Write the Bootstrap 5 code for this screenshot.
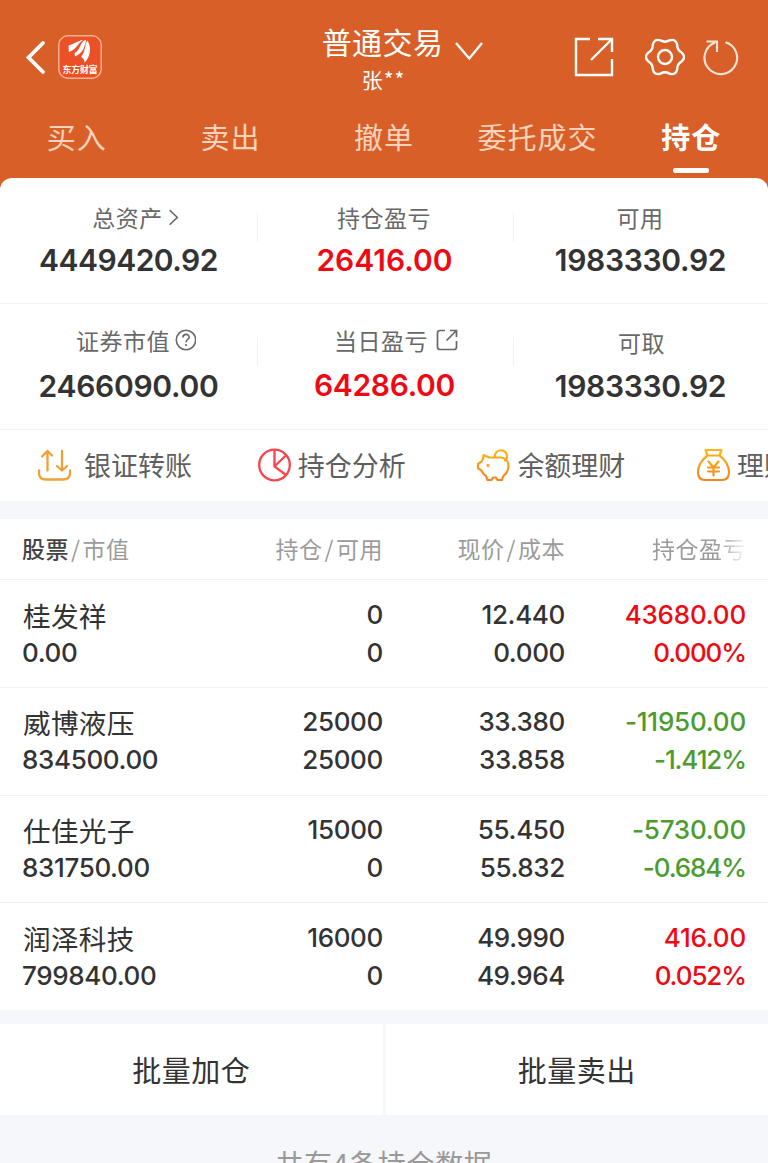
<!DOCTYPE html>
<html lang="zh-CN">
<head>
<meta charset="utf-8">
<meta name="viewport" content="width=device-width, initial-scale=1">
<title>普通交易 - 持仓</title>
<link href="https://cdn.jsdelivr.net/npm/bootstrap@5.3.0/dist/css/bootstrap.min.css" rel="stylesheet">
<style>
  body { font-family: "Noto Sans CJK SC", sans-serif; background: #f6f7fa; color: #333; height: 1163px; }
  .app { height: 1163px; }
  svg { display: block; flex: none; fill: none; }
  .top { background: #d86028; height: 190px; color: #fff; }
  .bar { height: 114px; }
  .side { width: 240px; }
  .logo { width: 44px; height: 44px; margin-left: 11px; }
  .heading { padding-top: 21px; }
  .title { font-size: 30px; line-height: 40px; height: 40px; letter-spacing: .4px; padding-left: 38px; }
  .title svg { margin: 19px 0 0 9px; }
  .subtitle { font-size: 21px; line-height: 28px; letter-spacing: .9px; padding: 4px 1px 0 0; }
  .tools { padding-right: 28px; }
  .tools .gear { margin: 0 18px 0 31px; }
  .tab { width: 153.6px; font-size: 29px; line-height: 44px; letter-spacing: 1px; color: #fbd3bd; }
  .tab.on { color: #fff; font-weight: 700; }
  .tab.on::after { content: ""; display: block; width: 36px; height: 5px; border-radius: 2px; background: #fff; margin: 10px auto 0; }
  .sheet { margin-top: -12px; border-radius: 12px 12px 0 0; }
  .rule { border-bottom: 1px solid #f2f2f3; }
  .sum { height: 126px; padding-top: 24px; }
  .sum.two { padding-top: 22px; }
  .lbl { font-size: 23px; line-height: 30px; letter-spacing: .5px; color: #686868; }
  .num { font-family: Inter, sans-serif; font-weight: 600; font-size: 30px; line-height: 36px; margin-top: 10px; letter-spacing: -.3px; padding-left: 1px; }
  .num.tight { letter-spacing: -.5px; }
  .num.plain { letter-spacing: 0; }
  .two .lbl { margin-top: -1px; }
  .two .num { margin-top: 13px; }
  .two .num.up { margin-top: 12px; }
  .two .low .lbl { padding-top: 2px; padding-left: 3px; }
  .two .low .num { margin-top: 11px; }
  .cell + .cell { background: linear-gradient(#f2f2f3, #f2f2f3) 1px 11px / 1px 29px no-repeat; }
  .up { color: #ee0a14; }
  .down { color: #4b9c2f; }
  .acts { height: 71px; padding-left: 37px; }
  .act { width: 219.7px; font-size: 27px; color: #5f5f5f; line-height: 40px; }
  .act span { padding-bottom: 2px; margin-left: 6px; }
  .act:first-child span { margin-left: 12px; }
  .band { height: 18px; background: #f6f7fa; }
  .line4 { padding: 0 22px; }
  .c1 { width: 200px; } .c2 { width: 161px; } .c3 { width: 182px; } .c4 { width: 181px; }
  .head { height: 61px; font-size: 23px; letter-spacing: .5px; line-height: 58px; color: #9b9b9b; }
  .head b { color: #444; font-weight: 500; }
  .head i { font-style: normal; margin: 0 2px; }
  .fade-r { -webkit-mask-image: linear-gradient(90deg, #000 84%, transparent 101%); mask-image: linear-gradient(90deg, #000 84%, transparent 101%); }
  .stock { height: 107.75px; padding-top: 15.5px; font-family: Inter, sans-serif; font-weight: 500; font-size: 26px; line-height: 38px; letter-spacing: -.35px; }
  .stock .c4 { letter-spacing: -.2px; }
  .stock .pct { letter-spacing: -1.1px; }
  .stock:last-child { border: 0; height: 107.2px; }
  .sname { font-family: "Noto Sans CJK SC", sans-serif; font-weight: 400; font-size: 27.6px; height: 38px; padding-left: 1px; letter-spacing: .3px; }
  .batch { height: 91px; margin-top: 14px; gap: 3px; }
  .batch button { background: #fff; border: 0; font-size: 29px; letter-spacing: .5px; color: #333; padding: 0; }
  .foot { font-size: 28px; line-height: 40px; letter-spacing: .7px; color: #999; margin-top: 28px; }
</style>
</head>
<body class="overflow-hidden">
<div class="app overflow-hidden">
  <header class="top">
    <div class="bar d-flex">
      <div class="side d-flex align-items-center">
        <svg class="ms-4" width="23" height="36" viewBox="0 0 23 36" stroke="#fff" stroke-width="3.800" stroke-linecap="round"><path d="M19 4L4.500 18.500L19 33"/></svg>
        <svg class="logo" viewBox="0 0 44 44">
          <rect x=".8" y=".8" width="42.400" height="42.400" rx="9" fill="#eb5027" stroke="#f7b193" stroke-width="1.500"/>
          <path fill="#fff" d="M10.500 10.500C15 9.500 20 5.500 25 5C20 8.500 18 15 10.800 17ZM16.500 18C22 15.500 22 8 26.500 5.200Q28.200 4.500 28 6.200C26.500 11 25.500 18 17 21.500ZM23 22C27.500 17 26.500 10 29.300 5.500C33.500 11 33 22 26.500 27.500Q26.500 23.500 23 22Z"/>
          <text x="22" y="38" text-anchor="middle" textLength="35" fill="#fff" font-family="Noto Sans CJK SC, sans-serif" font-weight="700" font-size="8.800">东方财富</text>
        </svg>
      </div>
      <div class="heading flex-fill text-center">
        <div class="title d-flex justify-content-center align-items-start"><span>普通交易</span>
          <svg width="32" height="22" viewBox="0 0 32 22" stroke="#fff" stroke-width="2.300"><path d="M4 3L17.300 18.500L30 3"/></svg></div>
        <div class="subtitle">张**</div>
      </div>
      <div class="side tools d-flex align-items-center justify-content-end">
        <svg width="40" height="40" viewBox="0 0 40 40" stroke="#fff" stroke-width="2.400"><path d="M16 2H2V38H38V22M24 2H38V15M38 2L17 23"/></svg>
        <svg class="gear" width="40" height="40" viewBox="-20 -20 40 40" stroke="#fff" stroke-width="2.400" stroke-linejoin="round"><path d="M16.600-4.450Q21.600 0 16.600 4.450Q12.100 7 12.200 12.200Q10.800 18.700 4.450 16.600Q0 14-4.450 16.600Q-10.800 18.700-12.200 12.200Q-12.100 7-16.600 4.450Q-21.600 0-16.600-4.450Q-12.100-7-12.200-12.200Q-10.800-18.700-4.450-16.600Q0-14 4.450-16.600Q10.800-18.700 12.200-12.200Q12.100-7 16.600-4.450Z"/><circle r="7"/></svg>
        <svg width="37" height="37" viewBox="0 0 37 37" stroke="#fde4d6" stroke-width="2.100"><path d="M22.500 3.200A16.300 16.300 0 1 1 12 3.600M3.500 2.500H14V13"/></svg>
      </div>
    </div>
    <nav class="d-flex text-center">
      <div class="tab">买入</div><div class="tab">卖出</div><div class="tab">撤单</div><div class="tab">委托成交</div><div class="tab on">持仓</div>
    </nav>
  </header>

  <main class="sheet bg-white position-relative">
    <section class="sum rule row g-0 text-center">
      <div class="col cell"><div class="lbl d-flex justify-content-center align-items-center ps-3">总资产<svg class="ms-1" width="13" height="20" viewBox="0 0 15 20" stroke="#686868" stroke-width="1.800"><path d="M3 2L12 10.500L3 19"/></svg></div><div class="num tight">4449420.92</div></div>
      <div class="col cell"><div class="lbl">持仓盈亏</div><div class="num plain up">26416.00</div></div>
      <div class="col cell"><div class="lbl">可用</div><div class="num">1983330.92</div></div>
    </section>
    <section class="sum two rule row g-0 text-center">
      <div class="col cell"><div class="lbl d-flex justify-content-center align-items-center ps-3">证券市值<svg class="ms-1" width="22" height="22" viewBox="0 0 22 22" stroke="#686868" stroke-width="1.600"><circle cx="12" cy="11" r="9.700"/><path d="M8.900 8.600C8.900 4.400 15.200 4.400 15.200 8.200C15.200 10.500 12 10.500 12 13.300M12 15V17"/></svg></div><div class="num">2466090.00</div></div>
      <div class="col cell"><div class="lbl d-flex justify-content-center align-items-center ps-4">当日盈亏<svg class="ms-2" width="22" height="22" viewBox="0 0 22 22" overflow="visible" stroke="#686868" stroke-width="1.700"><path d="M9 1.500H4Q1.500 1.500 1.500 4V18Q1.500 20.500 4 20.500H18Q20.500 20.500 20.500 18V12M14 1.500H20.500V8M20 2L10.500 11.500"/></svg></div><div class="num up">64286.00</div></div>
      <div class="col cell low"><div class="lbl">可取</div><div class="num">1983330.92</div></div>
    </section>
    <section class="acts d-flex overflow-hidden text-nowrap">
      <div class="act d-flex align-items-center flex-shrink-0"><svg width="35" height="34" viewBox="0 0 35 34" stroke="#f0a037" stroke-width="2.300" stroke-linecap="round" stroke-linejoin="round"><path d="M2 21.500V24Q2 30.500 9 30.500H26Q33 30.500 33 24V21.500M10.500 21.500V2L5 7.500M10.500 2L15 6.500M25 2V21.500L20 17M25 21.500L30 17"/></svg><span>银证转账</span></div>
      <div class="act d-flex align-items-center flex-shrink-0"><svg width="35" height="36" viewBox="0 0 35 36" stroke="#f8444c" stroke-width="2.300"><circle cx="17.500" cy="17" r="15.300"/><path d="M17.500 1.700V18.500L29 27M17.500 18.500L28.800 7.500"/></svg><span>持仓分析</span></div>
      <div class="act d-flex align-items-center flex-shrink-0">
        <svg width="35" height="36" viewBox="0 0 35 36" stroke="url(#gold)" stroke-width="2.200" stroke-linejoin="round" stroke-linecap="round"><defs><linearGradient id="gold" x1="0" y1="0" x2="0" y2="34" gradientUnits="userSpaceOnUse"><stop stop-color="#fbb917"/><stop offset="1" stop-color="#f58220"/></linearGradient></defs><path d="M7.500 7L13 9.500H25C30 10 32.500 14 32.500 18C32.500 22 30 26 27 28.500L26 32H21.500L20 29.500H17L15.500 32H11.500L10 28C7.500 27 6.500 24 5 22L2 20.500V16L5.500 13.500C6.500 12 7.500 11 7.500 7ZM18.500 8.500C19 0 32 0 31 9.500Q30.500 11.500 29 12.500"/><circle cx="12" cy="17.500" r=".6"/></svg><span>余额理财</span></div>
      <div class="act d-flex align-items-center flex-shrink-0"><svg width="35" height="36" viewBox="0 0 35 36" stroke="url(#gold)" stroke-width="2.200" stroke-linejoin="round" stroke-linecap="round"><path d="M9.500 2H25.500L23.500 7.500H11.500ZM11.500 7.500C5 12 2 19 2 24Q2 32 9 32H26Q33 32 33 24C33 19 30 12 23.500 7.500M12.500 13.500L17.500 19.500L22.500 13.500M17.500 19.500V27.500M12 19.500H23M12 23.500H23"/></svg><span>理财产品</span></div>
    </section>
    <div class="band"></div>
    <section>
      <div class="line4 head rule d-flex text-end">
        <div class="c1 text-start"><b>股票</b><i>/</i>市值</div><div class="c2">持仓<i>/</i>可用</div><div class="c3">现价<i>/</i>成本</div><div class="c4 fade-r">持仓盈亏</div>
      </div>
      <div>
        <div class="line4 stock rule d-flex text-end"><div class="c1 text-start"><div class="sname">桂发祥</div>0.00</div><div class="c2">0<br>0</div><div class="c3">12.440<br>0.000</div><div class="c4 up">43680.00<div class="pct">0.000%</div></div></div>
        <div class="line4 stock rule d-flex text-end"><div class="c1 text-start"><div class="sname">威博液压</div>834500.00</div><div class="c2">25000<br>25000</div><div class="c3">33.380<br>33.858</div><div class="c4 down">-11950.00<div class="pct">-1.412%</div></div></div>
        <div class="line4 stock rule d-flex text-end"><div class="c1 text-start"><div class="sname">仕佳光子</div>831750.00</div><div class="c2">15000<br>0</div><div class="c3">55.450<br>55.832</div><div class="c4 down">-5730.00<div class="pct">-0.684%</div></div></div>
        <div class="line4 stock rule d-flex text-end"><div class="c1 text-start"><div class="sname">润泽科技</div>799840.00</div><div class="c2">16000<br>0</div><div class="c3">49.990<br>49.964</div><div class="c4 up">416.00<div class="pct">0.052%</div></div></div>
      </div>
    </section>
  </main>
  <div class="batch d-flex"><button class="flex-fill">批量加仓</button><button class="flex-fill">批量卖出</button></div>
  <div class="foot text-center">共有4条持仓数据</div>
</div>
<script src="https://cdn.jsdelivr.net/npm/bootstrap@5.3.0/dist/js/bootstrap.bundle.min.js"></script>
</body>
</html>
